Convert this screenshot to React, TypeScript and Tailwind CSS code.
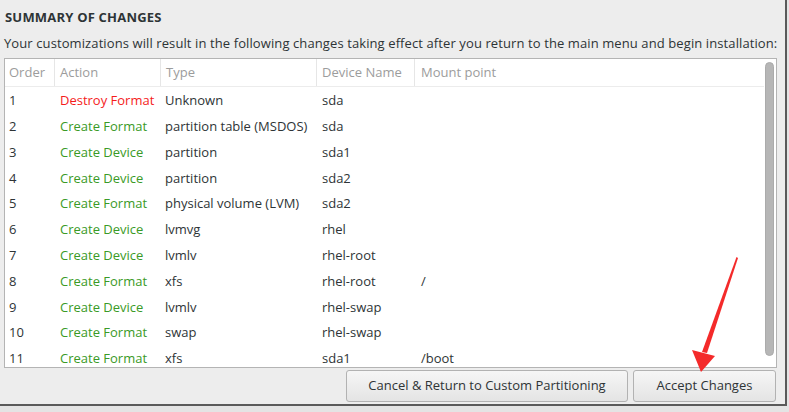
const ROWS = [
  { order: '1', action: 'Destroy Format', type: 'Unknown', device: 'sda', mount: '' },
  { order: '2', action: 'Create Format', type: 'partition table (MSDOS)', device: 'sda', mount: '' },
  { order: '3', action: 'Create Device', type: 'partition', device: 'sda1', mount: '' },
  { order: '4', action: 'Create Device', type: 'partition', device: 'sda2', mount: '' },
  { order: '5', action: 'Create Format', type: 'physical volume (LVM)', device: 'sda2', mount: '' },
  { order: '6', action: 'Create Device', type: 'lvmvg', device: 'rhel', mount: '' },
  { order: '7', action: 'Create Device', type: 'lvmlv', device: 'rhel-root', mount: '' },
  { order: '8', action: 'Create Format', type: 'xfs', device: 'rhel-root', mount: '/' },
  { order: '9', action: 'Create Device', type: 'lvmlv', device: 'rhel-swap', mount: '' },
  { order: '10', action: 'Create Format', type: 'swap', device: 'rhel-swap', mount: '' },
  { order: '11', action: 'Create Format', type: 'xfs', device: 'sda1', mount: '/boot' },
]

export default function App() {
  return (
    <div className="w-[789px] h-[412px] bg-[#e4e4e4] overflow-hidden relative font-['Open_Sans',sans-serif] text-[#2e3436]">
      <div className="w-[787px] h-[406px] bg-[#ededed] border-r-2 border-b-2 border-[#5a5a5a] flex flex-col pl-[4px] pr-[8px]">
        {/* Title */}
        <h1 className="pt-[8px] pl-[1px] h-[34px] text-[13px] font-bold tracking-[0.2px] leading-[18px]">
          SUMMARY OF CHANGES
        </h1>
        <p className="text-[13px] leading-[18px] h-[24px] tracking-[0.1px] whitespace-nowrap">
          Your customizations will result in the following changes taking effect after you return to the main menu and begin installation:
        </p>

        {/* Table */}
        <div className="h-[310px] bg-white border border-[#b4b4b4] flex overflow-hidden">
          <div className="flex-1 flex flex-col text-[13px]">
            <div className="flex h-[28px] items-center text-[#9c9c9c] border-b border-[#ececec] shrink-0">
              <div className="w-[50px] pl-[4px] border-r border-[#e6e6e6] h-full flex items-center">Order</div>
              <div className="w-[106px] pl-[5px] border-r border-[#e6e6e6] h-full flex items-center">Action</div>
              <div className="w-[156px] pl-[5px] border-r border-[#e6e6e6] h-full flex items-center">Type</div>
              <div className="w-[98px] pl-[5px] border-r border-[#e6e6e6] h-full flex items-center">Device Name</div>
              <div className="flex-1 pl-[6px] h-full flex items-center">Mount point</div>
            </div>
            <div className="pt-[1px] flex flex-col">
              {ROWS.map(r => (
                <div key={r.order} className="flex h-[25.8px] items-center shrink-0 whitespace-nowrap">
                  <div className="w-[50px] pl-[4px]">{r.order}</div>
                  <div className={`w-[106px] pl-[5px] ${r.action.startsWith('Destroy') ? 'text-[#f51c1c]' : 'text-[#3a9a26]'}`}>
                    {r.action}
                  </div>
                  <div className="w-[156px] pl-[4px]">{r.type}</div>
                  <div className="w-[98px] pl-[5px]">{r.device}</div>
                  <div className="flex-1 pl-[6px]">{r.mount}</div>
                </div>
              ))}
            </div>
          </div>
          {/* Scrollbar */}
          <div className="w-[12px] shrink-0 py-[3px] pr-[2px] flex justify-end">
            <div className="w-[9px] h-[294px] rounded-full bg-[#b6b6b6] border border-[#ababab]" />
          </div>
        </div>

        {/* Buttons */}
        <div className="flex justify-end gap-[5px] pt-[2px] pr-[1px]">
          <button className="w-[282px] h-[32px] rounded-[3px] border border-[#b2b2b2] bg-gradient-to-b from-[#f6f6f6] to-[#e4e4e4] text-[13px] text-[#2e3436]">
            Cancel &amp; Return to Custom Partitioning
          </button>
          <button className="w-[143px] h-[32px] rounded-[3px] border border-[#b2b2b2] bg-gradient-to-b from-[#f6f6f6] to-[#e4e4e4] text-[13px] text-[#2e3436]">
            Accept Changes
          </button>
        </div>
      </div>

      {/* Red annotation arrow */}
      <svg className="absolute left-0 top-0 pointer-events-none" width="789" height="412">
        <polygon points="736.5,257 738,258 707,353 702,352" fill="#f42a2a" />
        <polygon points="692,350 715,356 701,372" fill="#f42a2a" />
      </svg>
    </div>
  )
}
